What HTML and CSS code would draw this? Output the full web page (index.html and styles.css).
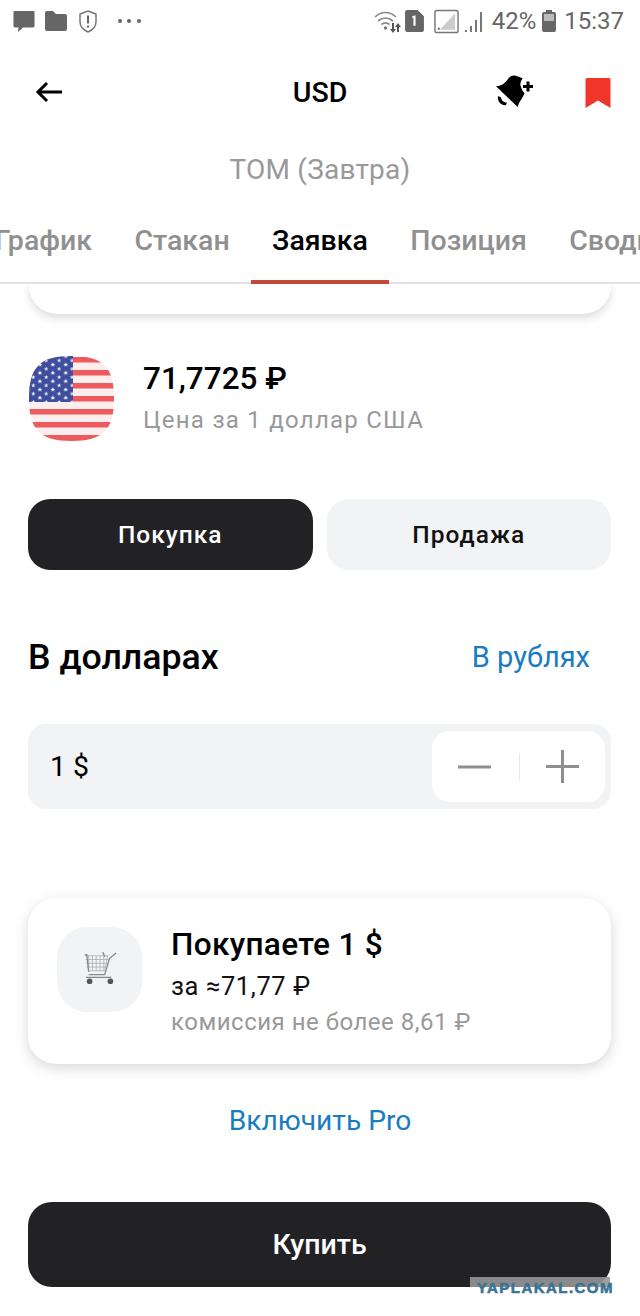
FILE: index.html
```html
<!DOCTYPE html>
<html lang="ru">
<head>
<meta charset="utf-8">
<title>USD</title>
<link rel="stylesheet" href="styles.css">
</head>
<body>
<div class="page">
  <div class="status">
    <div class="status-left">
      <svg width="22" height="22" viewBox="0 0 24 24"><path fill="#666" d="M2 1h20a1.500 1.500 0 0 1 1.500 1.500v15a1.500 1.500 0 0 1-1.500 1.500H11l-5.500 5 .5-5H2a1.500 1.500 0 0 1-1.500-1.500v-15A1.500 1.500 0 0 1 2 1z"/></svg>
      <svg width="22" height="20" viewBox="0 0 22 20"><path fill="#666" d="M2 0h6l3 3h9a2 2 0 0 1 2 2v13a2 2 0 0 1-2 2H2a2 2 0 0 1-2-2V2a2 2 0 0 1 2-2z"/></svg>
      <svg class="shield" width="18" height="23" viewBox="0 0 18 23"><path fill="none" stroke="#777" stroke-width="1.500" d="M9 1l8 3v8c0 4.500-3.500 8-8 10-4.500-2-8-5.500-8-10V4z"/><path fill="#666" d="M8 5.500h2v8H8zM8 15.500h2v2H8z"/></svg>
      <div class="dots"><i></i><i></i><i></i></div>
    </div>
    <div class="status-right">
      <svg class="wifi" width="28" height="24" viewBox="0 0 28 24"><g fill="none" stroke="#888" stroke-width="1.700"><path d="M1 8c6-6 15-6 21 0"/><path d="M4 12c4.500-4 10.500-4 15 0"/><path d="M7.500 15.500c2.500-2 5.500-2 8 0"/></g><circle cx="11.500" cy="19" r="1.700" fill="#777"/><path fill="#555" d="M18 14h2v6h2l-3 4-3-4h2zM24 14l3 4h-2v5h-2v-5h-2z"/></svg>
      <svg class="sim" width="19" height="22" viewBox="0 0 18 21"><path fill="#666" d="M2 0h10l6 6v13a2 2 0 0 1-2 2H2a2 2 0 0 1-2-2V2a2 2 0 0 1 2-2z"/><path fill="#fff" d="M7 6l3-1v10H8V7.500L7 8z"/></svg>
      <svg class="net" width="25" height="25" viewBox="0 0 26 25"><rect x="1" y="1" width="24" height="23" rx="2" fill="none" stroke="#777" stroke-width="1.500"/><path fill="#ccc" d="M22 4v17H6z"/><path fill="#666" d="M4 19h2v2H4z"/></svg>
      <svg class="bars" width="19" height="23" viewBox="0 0 19 23"><path fill="#777" d="M0 20h2v2H0zM5 16h2v6H5zM10 10h2v12h-2zM15 2h2v20h-2z"/></svg>
      <span class="pct">42%</span>
      <svg class="batt" width="14" height="22" viewBox="0 0 14 22"><path fill="#666" d="M4 0h6v2h2a2 2 0 0 1 2 2v16a2 2 0 0 1-2 2H2a2 2 0 0 1-2-2V4a2 2 0 0 1 2-2h2z"/><rect x="2" y="4" width="10" height="7" fill="#bbb"/></svg>
      <span class="time">15:37</span>
    </div>
  </div>

  <header class="topbar">
    <svg class="back" width="28" height="22" viewBox="0 0 28 22"><path fill="none" stroke="#000" stroke-width="3" d="M27 11H3M12 2l-9 9 9 9"/></svg>
    <div class="title">USD</div>
    <svg class="bell" width="38" height="36" viewBox="0 0 38 36"><path fill="#000" d="M1 12.300C7 12 11 8 13 5c2-3 5-4 7-3.500l7.700 2.800Q24 9 26 13q1 4 3.500 6C28 24 24 27 22.700 33z"/><path fill="#000" d="M3 22c-1 5 3 10 8 9l1-2.500c-3 .5-6-2.500-6-5z"/><path fill="#000" d="M31.500 7.500h3V11H38v3h-3.500v3.500h-3V14H28v-3h3.500z"/></svg>
    <svg class="mark" width="26" height="30" viewBox="0 0 26 30"><path fill="#f0352b" d="M2 0h22a1.500 1.500 0 0 1 1.500 1.500V30L13 22.500.5 30V1.500A1.500 1.500 0 0 1 2 0z"/></svg>
  </header>

  <div class="subtitle">ТОМ (Завтра)</div>

  <nav class="tabs">
    <a class="tab">График</a>
    <a class="tab">Стакан</a>
    <a class="tab active">Заявка</a>
    <a class="tab">Позиция</a>
    <a class="tab">Сводка</a>
  </nav>

  <div class="stub"></div>

  <section class="quote">
    <svg class="flag" width="85" height="85" viewBox="0 0 85 85">
      <defs>
        <clipPath id="squircle"><path d="M42.500 0C74 0 85 11 85 42.500S74 85 42.500 85 0 74 0 42.500 11 0 42.500 0z"/></clipPath>
        <polygon id="star" fill="#fff" points="0,-2.200 .6,-.7 2.100,-.7 .9,.3 1.300,1.800 0,.9 -1.300,1.800 -.9,.3 -2.100,-.7 -.6,-.7"/>
        <pattern id="stars" patternUnits="userSpaceOnUse" x="-2" y="2.500" width="12.900" height="8.300">
          <use href="#star" x="6.300" y="2.100"/>
          <use href="#star" x="12.700" y="6.200"/>
          <use href="#star" x="0.200" y="6.200"/>
        </pattern>
      </defs>
      <g clip-path="url(#squircle)">
        <rect width="85" height="85" fill="#fdeeee"/>
        <path fill="#ee5b5f" d="M0 1h85v5.500H0zM0 14h85v5.500H0zM0 27h85v5.500H0zM0 40h85v5.500H0zM0 53h85v5.500H0zM0 66h85v5.500H0zM0 79h85v6H0z"/>
        <rect width="44" height="46" fill="#3f4d9e"/>
        <rect width="44" height="46" fill="url(#stars)"/>
      </g>
    </svg>
    <div class="quote-text">
      <div class="price">71,7725 ₽</div>
      <div class="price-note">Цена за 1 доллар США</div>
    </div>
  </section>

  <div class="side">
    <button class="side-btn on">Покупка</button>
    <button class="side-btn">Продажа</button>
  </div>

  <div class="amount-head">
    <h2>В долларах</h2>
    <a class="link">В рублях</a>
  </div>

  <div class="field">
    <span class="field-value">1 $</span>
    <div class="stepper">
      <svg width="34" height="4" viewBox="0 0 34 4"><rect width="33" height="3" y="0.500" fill="#8f8f92"/></svg>
      <span class="step-sep"></span>
      <svg width="33" height="33" viewBox="0 0 33 33"><path fill="#8f8f92" d="M15 0h3v15h15v3H18v15h-3V18H0v-3h15z"/></svg>
    </div>
  </div>

  <section class="summary">
    <div class="cart-tile">
      <svg class="cart" width="34" height="34" viewBox="0 0 36 36">
        <path fill="none" stroke="#aaa" stroke-width="0.800" d="M2 5h25M3 9h24M3.500 13h22M4 17h20M5 21h18M6 5v16M10 5v16M14 5v16M18 5v16M22 5v16M26 5l-3 16"/>
        <path fill="none" stroke="#888" stroke-width="1.400" d="M35 2l-7 6-5 17H6M21 1l2 5M30 28H3M2 4h2l2 18"/>
        <circle cx="7" cy="32" r="3" fill="#555"/><circle cx="29" cy="32" r="3" fill="#555"/>
      </svg>
    </div>
    <div class="summary-text">
      <div class="sum-title">Покупаете 1 $</div>
      <div class="sum-price">за ≈71,77 ₽</div>
      <div class="sum-fee">комиссия не более 8,61 ₽</div>
    </div>
  </section>

  <a class="pro">Включить Pro</a>

  <button class="buy">Купить</button>

  <div class="watermark"><span>YAPLAKAL.COM</span></div>
</div>
</body>
</html>
```

FILE: styles.css
```css
* { box-sizing: border-box; }
html, body { margin: 0; padding: 0; background: #fff; }
body { font-family: Roboto, "Liberation Sans", sans-serif; color: #000; }
.page { position: relative; width: 640px; height: 1316px; overflow: hidden; background: #fff; }

.status { height: 46px; display: flex; justify-content: space-between; align-items: center; padding: 0 16px 4px 13px; color: #666; }
.status-left { display: flex; align-items: center; gap: 10px; }
.shield { margin-left: 2px; }
.dots { display: flex; gap: 5.300px; margin-left: 11px; }
.dots i { width: 4px; height: 4px; border-radius: 50%; background: #666; }
.status-right { display: flex; align-items: center; }
.wifi { margin-right: 3px; }
.sim { margin-right: 10px; }
.bars { margin: 0 8px 0 6px; }
.pct { font-size: 24px; margin-right: 6px; }
.batt { margin-right: 8px; }
.time { font-size: 24px; }

.topbar { position: relative; height: 92px; display: flex; align-items: center; padding: 0 29px 0 35px; }
.title { position: absolute; left: 0; right: 0; text-align: center; font-size: 28.500px; font-weight: 500; }
.back { flex: none; margin-right: auto; }
.bell { flex: none; margin-right: 52px; }
.mark { flex: none; margin-top: 2px; }

.subtitle { height: 32px; margin-top: 16px; line-height: 32px; text-align: center; font-size: 28px; color: #999; letter-spacing: 0.200px; }

.tabs { display: flex; height: 68px; margin-top: 30px; margin-left: -26.500px; width: 680px; border-bottom: 2px solid #e2e2e2; position: relative; }
.tab { flex: none; height: 68px; padding: 7px 21.200px 0; font-size: 28.500px; line-height: 36px; font-weight: 500; color: #909090; white-space: nowrap; }
.tab.active { color: #000; border-bottom: 4px solid #c24a3c; }

.stub { height: 30px; margin: 0 29px; background: #fff; border-radius: 0 0 28px 28px; box-shadow: 0 4px 10px rgba(0,0,0,.14); }

.quote { display: flex; align-items: flex-start; gap: 29px; margin: 42px 0 0 29px; height: 85px; }
.flag { flex: none; }
.quote-text { display: flex; flex-direction: column; gap: 5px; margin-top: 3px; }
.price { font-size: 31.500px; line-height: 40px; font-weight: 500; }
.price-note { font-size: 24px; line-height: 32px; color: #999; letter-spacing: 1.250px; }

.side { display: flex; gap: 14px; margin: 58px 29px 0 28px; }
.side-btn { flex: 1; height: 71px; border: 0; border-radius: 22px; background: #f2f3f5; color: #111; font: 500 24.500px Roboto, sans-serif; letter-spacing: 1px; padding: 0; }
.side-btn.on { background: #222224; color: #fff; }

.amount-head { display: flex; justify-content: space-between; align-items: center; margin: 66px 50px 0 28px; height: 42px; }
.amount-head h2 { margin: 0; font-size: 35.700px; font-weight: 500; }
.link { font-size: 29px; color: #1a7cc0; }

.field { display: flex; align-items: center; justify-content: space-between; height: 85px; margin: 46px 29px 0 28px; padding: 0 6px 0 22px; border-radius: 18px; background: #f2f3f5; }
.field-value { font-size: 28.500px; }
.stepper { display: flex; align-items: center; justify-content: space-between; width: 173px; height: 71px; padding: 0 26px; border-radius: 18px; background: #fff; }
.step-sep { width: 1px; height: 28px; background: #e8e8e8; }

.summary { display: flex; gap: 29px; align-items: flex-start; height: 166px; margin: 89px 29px 0 28px; padding: 29px 29px 0; border-radius: 28px; background: #fff; box-shadow: 0 4px 14px rgba(0,0,0,.16); }
.cart-tile { flex: none; width: 85px; height: 85px; display: flex; align-items: center; justify-content: center; border-radius: 30px; background: #f2f3f5; }
.cart { margin-bottom: 3px; }
.summary-text { display: flex; flex-direction: column; margin-top: -1px; }
.sum-title { font-size: 31.600px; line-height: 38px; font-weight: 500; letter-spacing: 0.300px; }
.sum-price { font-size: 25.500px; line-height: 32px; margin-top: 6px; letter-spacing: 0.600px; color: #111; }
.sum-fee { font-size: 24px; line-height: 32px; margin-top: 4px; color: #999; letter-spacing: 0.500px; }

.pro { display: block; margin-top: 39px; text-align: center; font-size: 28.200px; line-height: 36px; color: #1a7cc0; }

.buy { display: block; width: 583px; height: 85px; margin: 63px 0 0 28px; border: 0; border-radius: 24px; background: #222224; color: #fff; font: 500 28.500px Roboto, sans-serif; padding: 0; }

.watermark { position: absolute; left: 470px; top: 1277px; width: 140px; height: 10px; background: rgba(150,150,150,.9); }
.watermark span { position: absolute; left: 7px; top: 2.500px; font: 900 15px/15px "Liberation Sans", sans-serif; letter-spacing: 1.450px; -webkit-text-stroke: 0.600px #3a7394; color: #3a7394; white-space: nowrap; }
```
